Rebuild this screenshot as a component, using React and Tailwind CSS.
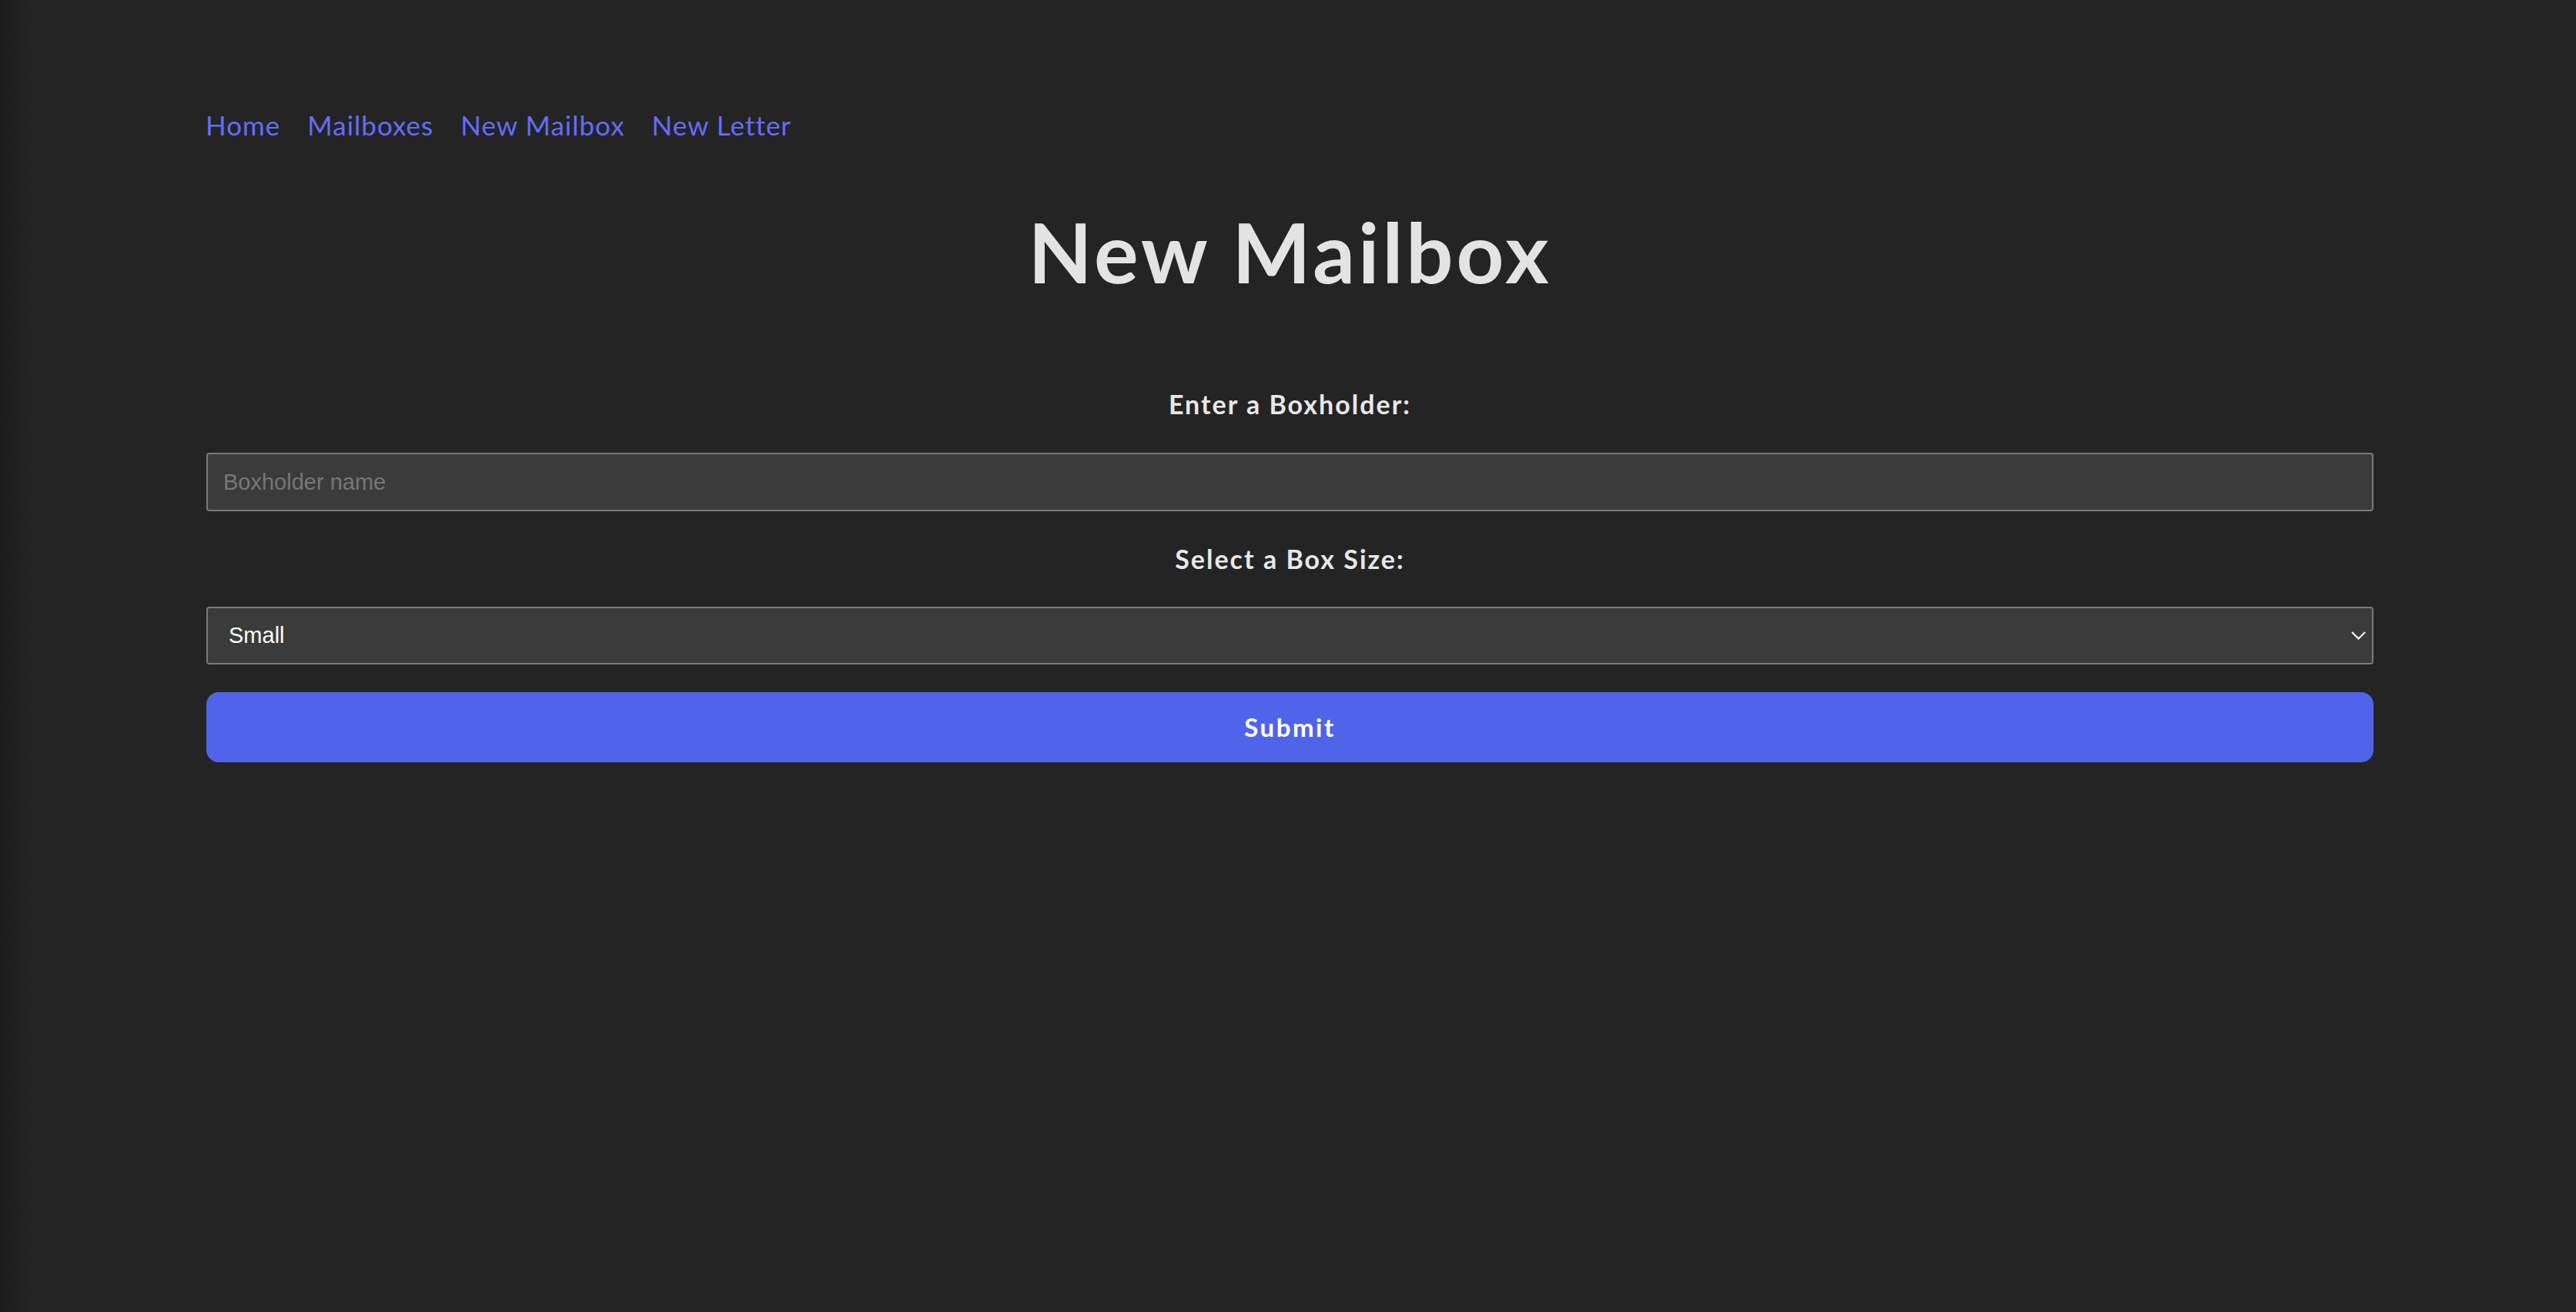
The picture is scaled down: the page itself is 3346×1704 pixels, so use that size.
import { useState } from "react";

const App = () => {
  const [boxholder, setBoxholder] = useState("");
  const [size, setSize] = useState("small");

  const links = ["Home", "Mailboxes", "New Mailbox", "New Letter"];

  return (
    <div className="min-h-screen w-full bg-[linear-gradient(to_right,#1c1c1c,#242424_44px)] pl-[268px] pr-[263px] pt-[141px] font-['Lato',sans-serif] text-[#e2e2e2]">
      {/* Nav */}
      <nav className="-ml-[1px] flex gap-[35px] text-[35px] leading-[42px] tracking-[1px] text-[#646cff]">
        {links.map((link) => (
          <a key={link} href="#" className="hover:text-[#535bf2]">
            {link}
          </a>
        ))}
      </nav>

      <h1 className="mt-[78px] text-center text-[108px] font-bold leading-[130px] tracking-[4px] text-[#e3e3e3]">
        New Mailbox
      </h1>

      <form onSubmit={(e) => e.preventDefault()} className="flex flex-col">
        <label className="mt-[113px] text-center text-[34px] font-bold leading-[41px] tracking-[2px] text-[#e8e8e8]">
          Enter a Boxholder:
        </label>
        <input
          type="text"
          value={boxholder}
          onChange={(e) => setBoxholder(e.target.value)}
          placeholder="Boxholder name"
          className="mt-[43px] h-[76px] w-full rounded-[4px] border-2 border-[#7a7a7a] bg-[#3b3b3b] px-[20px] font-['Liberation_Sans',sans-serif] text-[29px] text-white placeholder:text-[#767676] outline-none"
        />

        <label className="mt-[41px] text-center text-[34px] font-bold leading-[41px] tracking-[2px] text-[#e8e8e8]">
          Select a Box Size:
        </label>
        <div className="relative mt-[42px]">
          <select
            value={size}
            onChange={(e) => setSize(e.target.value)}
            className="h-[75px] w-full appearance-none rounded-[4px] border-2 border-[#7a7a7a] bg-[#3b3b3b] pl-[27px] font-['Liberation_Sans',sans-serif] text-[29px] text-white outline-none"
          >
            <option value="small">Small</option>
            <option value="medium">Medium</option>
            <option value="large">Large</option>
          </select>
          <svg
            className="pointer-events-none absolute right-[10px] top-[32px] h-[11px] w-[19px]"
            viewBox="0 0 19 11"
            fill="none"
            stroke="white"
            strokeWidth="2"
          >
            <path d="M1 1l8.5 8.5L18 1" />
          </svg>
        </div>

        <button
          type="submit"
          className="mt-[36px] flex h-[91px] w-full items-center justify-center rounded-[16px] bg-[#5064ea] text-[33px] font-bold tracking-[2.5px] text-white"
        >
          Submit
        </button>
      </form>
    </div>
  );
};

export default App;
